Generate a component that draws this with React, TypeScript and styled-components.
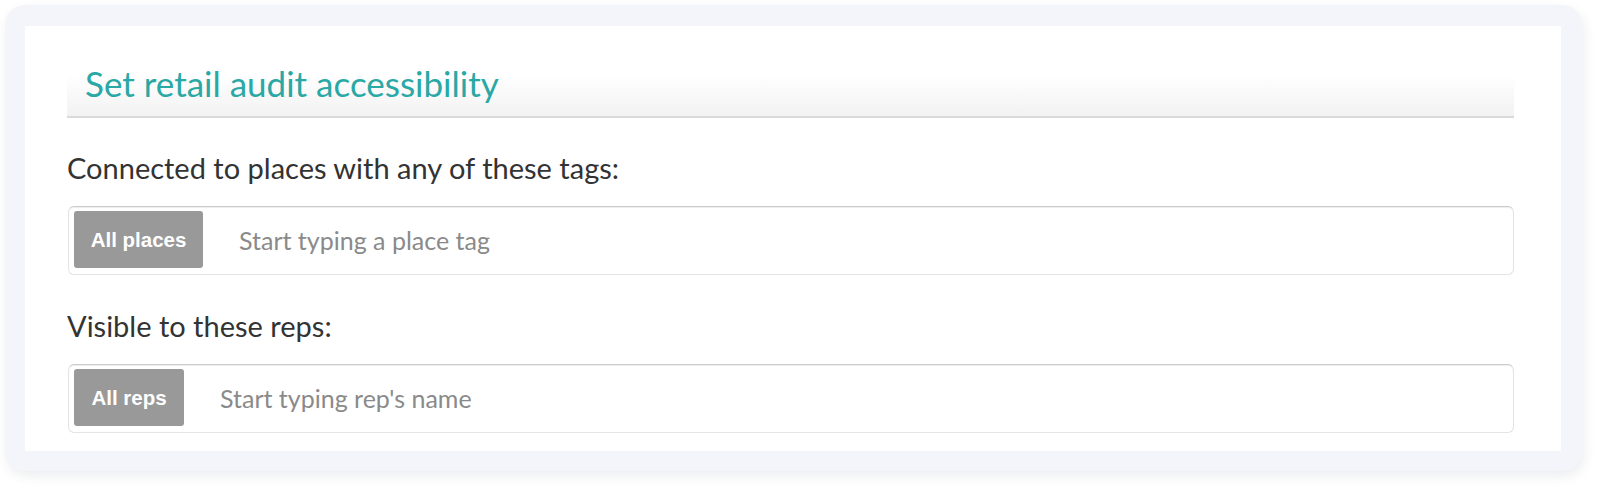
import React from 'react';
import styled, { createGlobalStyle } from 'styled-components';

const GlobalStyle = createGlobalStyle`
  html, body {
    margin: 0;
    padding: 0;
    background: #ffffff;
    font-family: Lato, "Open Sans", sans-serif;
  }
`;

const Page = styled.div`
  padding: 5px 25px 25px 5px;
`;

const Frame = styled.div`
  background: #f4f5fa;
  border-radius: 20px;
  padding: 21px 21px 20px 20px;
  box-shadow: 2px 5px 12px rgba(40, 50, 80, 0.09);
`;

const Panel = styled.section`
  background: #ffffff;
  padding: 38px 47px 18px 42px;
  display: flex;
  flex-direction: column;
`;

const Heading = styled.h2`
  margin: 0;
  padding: 0 0 14px 18px;
  font-family: Lato, sans-serif;
  font-weight: 400;
  font-size: 35px;
  line-height: 38px;
  color: #2aa8a5;
  background: linear-gradient(to bottom, #ffffff 0%, #ffffff 20%, #f2f2f2 100%);
  border-bottom: 2px solid #dadada;
`;

const Field = styled.div<{ $top: number }>`
  margin-top: ${p => p.$top}px;
  display: flex;
  flex-direction: column;
`;

const Label = styled.label`
  font-family: Lato, sans-serif;
  font-size: 29px;
  line-height: 34px;
  color: #333;
  margin-bottom: 21px;
`;

const TagBox = styled.div`
  height: 69px;
  box-sizing: border-box;
  margin-left: 1px;
  border: 1px solid #e4e4e4;
  border-top-color: #cbcbcb;
  border-radius: 6px;
  padding: 4px 4px 6px 5px;
  display: flex;
  align-items: stretch;
  background: #fff;
  box-shadow: inset 0 1px 1px rgba(0, 0, 0, 0.07);
`;

const Tag = styled.span<{ $width: number }>`
  width: ${p => p.$width}px;
  border-radius: 3px;
  background: #999999;
  color: #fff;
  font-family: "Liberation Sans", Arial, sans-serif;
  font-weight: 700;
  font-size: 20.5px;
  display: flex;
  align-items: center;
  justify-content: center;
`;

const Placeholder = styled.span`
  margin-left: 36px;
  display: flex;
  align-items: center;
  font-family: Lato, sans-serif;
  font-size: 25px;
  color: #8a8a8a;
`;

const fields = [
  { label: 'Connected to places with any of these tags:', tag: 'All places', tagWidth: 129, placeholder: 'Start typing a place tag', top: 33 },
  { label: 'Visible to these reps:', tag: 'All reps', tagWidth: 110, placeholder: "Start typing rep's name", top: 34 },
];

export default function App() {
  return (
    <>
      <GlobalStyle />
      <Page>
        <Frame>
          <Panel>
            <Heading>Set retail audit accessibility</Heading>
            {fields.map(f => (
              <Field key={f.tag} $top={f.top}>
                <Label>{f.label}</Label>
                <TagBox>
                  <Tag $width={f.tagWidth}>{f.tag}</Tag>
                  <Placeholder>{f.placeholder}</Placeholder>
                </TagBox>
              </Field>
            ))}
          </Panel>
        </Frame>
      </Page>
    </>
  );
}
